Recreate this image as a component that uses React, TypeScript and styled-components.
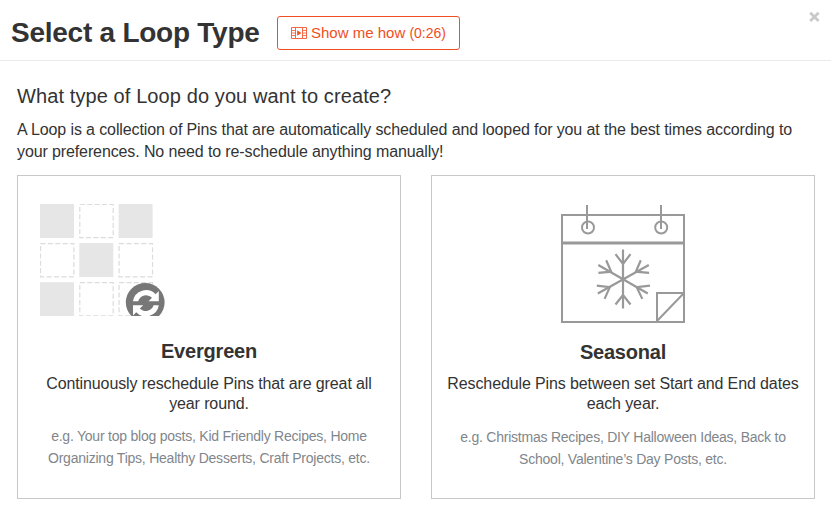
import React from "react";
import styled, { createGlobalStyle } from "styled-components";

const GlobalStyle = createGlobalStyle`
  *, *::before, *::after { box-sizing: border-box; }
  body {
    margin: 0;
    background: #fff;
    color: #333;
    font-family: "Liberation Sans", Arial, sans-serif;
    font-size: 16px;
  }
`;

const Dialog = styled.main`
  height: 511px;
  overflow: hidden;
`;

const Header = styled.header`
  display: flex;
  align-items: flex-start;
  height: 61px;
  padding: 0 11px;
  border-bottom: 1px solid #eaeaea;
`;

const Title = styled.h1`
  width: 249px;
  margin: 16px 17px 0 0;
  font-size: 28px;
  line-height: 34px;
  font-weight: 700;
  letter-spacing: -0.25px;
  white-space: nowrap;
`;

const HowButton = styled.button`
  display: flex;
  align-items: center;
  gap: 4px;
  width: 183px;
  height: 34px;
  margin-top: 16px;
  padding: 0 0 0 13px;
  border: 1px solid #f04e23;
  border-radius: 3px;
  background: #fff;
  color: #f04e23;
  font: 15px/20px "Liberation Sans", Arial, sans-serif;
  white-space: nowrap;
`;

const Duration = styled.span`
  font-size: 14px;
`;

const CloseButton = styled.button`
  display: flex;
  margin: 11px 0 0 auto;
  padding: 0;
  border: 0;
  background: none;
`;

const Body = styled.section`
  padding: 23px 16px 0 17px;
`;

const Question = styled.h2`
  margin: 0 0 11px;
  font-size: 20px;
  line-height: 24px;
  font-weight: 400;
  letter-spacing: 0.1px;
  white-space: nowrap;
`;

const Intro = styled.p`
  margin: 0 0 12px;
  line-height: 22px;
  letter-spacing: -0.115px;
  white-space: nowrap;
`;

const Options = styled.div`
  display: grid;
  grid-template-columns: 384px 384px;
  gap: 30px;
`;

const Card = styled.article`
  height: 324px;
  border: 1px solid #c8c8c8;
  text-align: center;
  white-space: nowrap;
`;

const Picture = styled.div<{ $align: string }>`
  display: flex;
  justify-content: ${(p) => p.$align};
  height: 163px;
  padding: 28px 22px 0;
`;

const CardTitle = styled.h3<{ $drop: number }>`
  margin: ${(p) => p.$drop}px 0 ${(p) => 10 - p.$drop}px;
  font-size: 20px;
  line-height: 25px;
  font-weight: 700;
  letter-spacing: -0.2px;
`;

const Summary = styled.p`
  margin: 0;
  line-height: 20px;
  letter-spacing: -0.115px;
`;

const Examples = styled.p<{ $drop: number }>`
  margin: ${(p) => 11 + p.$drop}px 0 0;
  color: #7f868c;
  font-size: 14px;
  line-height: 22px;
  letter-spacing: -0.23px;
`;

const FilmIcon = () => (
  <svg width="16" height="12" viewBox="0 0 16 12" fill="none" stroke="currentColor">
    <path d="M.5 .5h15v11H.5zM4.5 1v10M11.5 1v10" opacity=".85" />
    <path d="M1 3.5h3M1 6h3M1 8.5h3M12 3.5h3M12 6h3M12 8.5h3" opacity=".75" />
    <path d="M6.2 3.2v5.6L10.4 6z" fill="currentColor" stroke="none" />
  </svg>
);

const CloseIcon = () => (
  <svg width="12" height="12" viewBox="0 0 12 12" stroke="#c9c9c9" strokeWidth="2.7">
    <path d="M2.2 1.8l8.4 8.2M10.6 1.8L2.2 10" />
  </svg>
);

const tiles = Array.from({ length: 9 }, (_, i) => ({
  x: (i % 3) * 39.3,
  y: Math.floor(i / 3) * 39.1,
  filled: i % 2 === 0 && i !== 8,
}));

const EvergreenArt = () => (
  <svg width="126" height="112" viewBox="0 0 126 112">
    {tiles.map((t, i) =>
      t.filled ? (
        <rect key={i} x={t.x} y={t.y} width="34" height="34" fill="#e6e6e6" />
      ) : (
        <rect
          key={i}
          x={t.x + 0.5}
          y={t.y + 0.5}
          width="33.4"
          height="33.2"
          fill="none"
          stroke="#dcdcdc"
          strokeWidth="1.2"
          strokeDasharray="5 2.4"
        />
      ),
    )}
    <circle cx="105.2" cy="98.4" r="19.4" fill="#777" />
    <g fill="#fff">
      <path d="M93 97.2A13.2 13.2 0 0 1 115.6 90.2L118.8 87V97.2H108.6L112 93.8A8.3 8.3 0 0 0 98.2 97.2z" />
      <path d="M118.8 101.2A13.2 13.2 0 0 1 96.2 108.2L93 111.4V101.2H103.2L99.8 104.6A8.3 8.3 0 0 0 113.6 101.2z" />
    </g>
  </svg>
);

const SeasonalArt = () => (
  <svg width="126" height="120" viewBox="0 0 126 120" fill="none" stroke="#999" strokeWidth="2">
    <path d="M2 11h122v107H2z" />
    <path d="M2 39h122" strokeWidth="3" />
    <path d="M27 1v24M101 1v24" />
    <circle cx="28" cy="23.5" r="6" />
    <circle cx="101.2" cy="23.5" r="6" />
    <path d="M123 89H97v28M97 117l27-28" />
    <path d="M63 45.5v59M38.3 61l49.5 28.5M37.8 89.5L88.8 61" strokeWidth="2.2" />
    <path
      d="M55.5 50.2L63 60l7.5-9.8M55.5 100.5L63 91l7.5 9.5M46.2 56.2l5 11.5-12.8 1.2M80.8 56.2l-5 11.5 13.3 1.2M36.8 81.6l13 1.5-5.2 11.8M90 81.6l-13.3 1.5 5.6 11.8"
      strokeWidth="2.2"
    />
  </svg>
);

export default function App() {
  return (
    <Dialog>
      <GlobalStyle />
      <Header>
        <Title>Select a Loop Type</Title>
        <HowButton>
          <FilmIcon />
          <span>Show me how <Duration>(0:26)</Duration></span>
        </HowButton>
        <CloseButton aria-label="Close"><CloseIcon /></CloseButton>
      </Header>
      <Body>
        <Question>What type of Loop do you want to create?</Question>
        <Intro>
          A Loop is a collection of Pins that are automatically scheduled and looped for you at the best times according to
          <br />
          your preferences. No need to re-schedule anything manually!
        </Intro>
        <Options>
          <Card>
            <Picture $align="flex-start"><EvergreenArt /></Picture>
            <CardTitle $drop={0}>Evergreen</CardTitle>
            <Summary>Continuously reschedule Pins that are great all<br />year round.</Summary>
            <Examples $drop={0}>
              e.g. Your top blog posts, Kid Friendly Recipes, Home<br />
              Organizing Tips, Healthy Desserts, Craft Projects, etc.
            </Examples>
          </Card>
          <Card>
            <Picture $align="center"><SeasonalArt /></Picture>
            <CardTitle $drop={1}>Seasonal</CardTitle>
            <Summary>Reschedule Pins between set Start and End dates<br />each year.</Summary>
            <Examples $drop={1}>
              e.g. Christmas Recipes, DIY Halloween Ideas, Back to<br />
              School, Valentine’s Day Posts, etc.
            </Examples>
          </Card>
        </Options>
      </Body>
    </Dialog>
  );
}
